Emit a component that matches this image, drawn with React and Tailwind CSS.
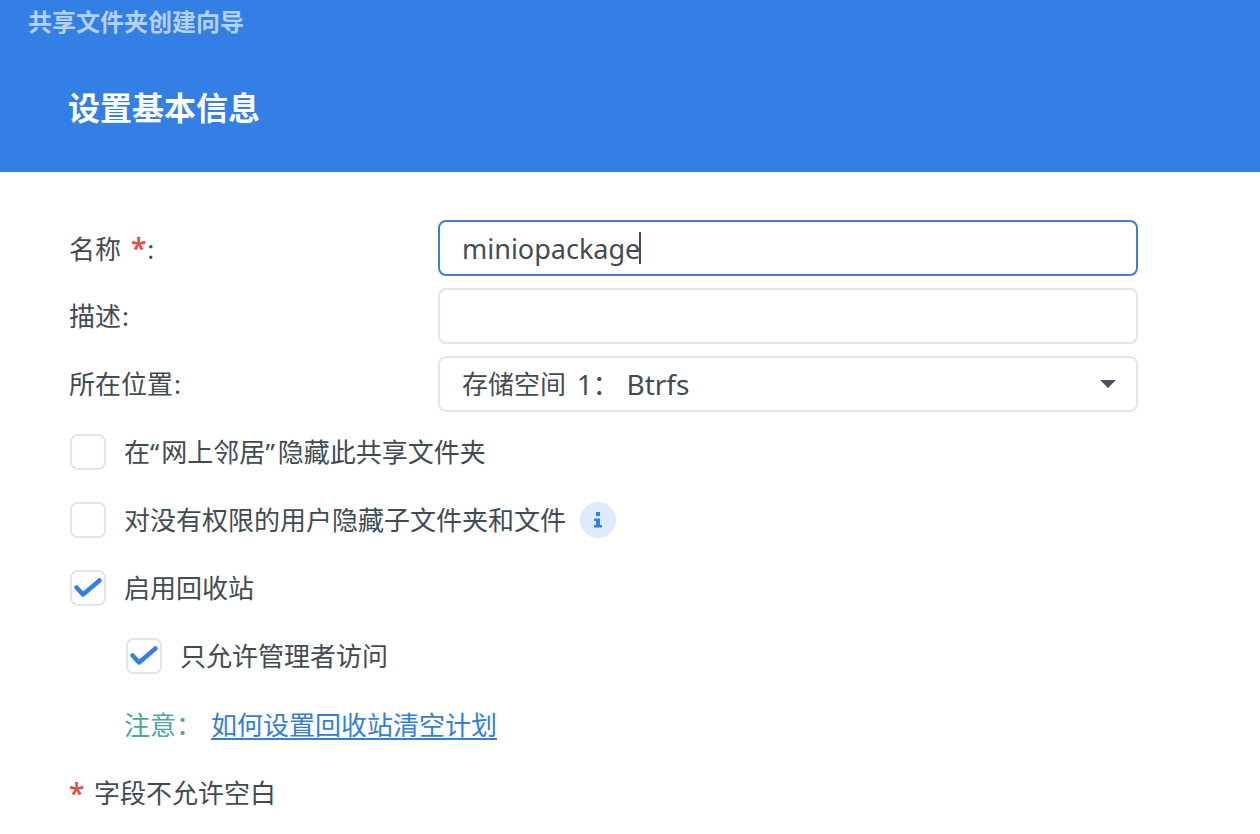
const FONT = "font-['Noto_Sans','Noto_Sans_CJK_SC',sans-serif]"
const INPUT = 'flex h-14 w-[700px] items-center rounded-[8px] border-2 bg-white pl-[22px] pr-5 text-[26px] leading-none text-[#414b55]'

function Check({ checked }) {
  return (
    <span className="flex h-9 w-9 shrink-0 items-center justify-center rounded-[8px] border-2 border-[#dfe6ec] bg-white">
      {checked && (
        <svg className="h-9 w-9 shrink-0" viewBox="0 0 36 36" fill="none">
          <path d="M6.5 17.5l6.5 7L29.5 10.5" stroke="#337fe5" strokeWidth="4.5" strokeLinecap="round" strokeLinejoin="round" />
        </svg>
      )}
    </span>
  )
}

function Field({ label, star, children }) {
  return (
    <div className="flex items-center">
      <div className="w-[369px] text-[26px] leading-none text-[#414b55]">
        {label}
        {star && <span className="ml-[10px] text-[28px] leading-none font-semibold text-[#d9534f]">*</span>}
        <span className="ml-px">:</span>
      </div>
      {children}
    </div>
  )
}

function CheckRow({ checked, children, indent }) {
  return (
    <div className={`flex h-9 items-center text-[26px] leading-none text-[#414b55] ${indent ? 'pl-[57px]' : 'pl-px'}`}>
      <Check checked={checked} />
      <span className="ml-[18px]">{children}</span>
    </div>
  )
}

export default function App() {
  return (
    <div className={`h-[834px] w-[1260px] overflow-hidden bg-white ${FONT}`}>
      <header className="h-[172px] bg-[#337fe5]">
        <div className="pl-7 pt-2 text-2xl leading-[28px] font-bold text-[#b5d2f6]">共享文件夹创建向导</div>
        <h1 className="pl-[68px] pt-[52px] text-[32px] leading-[40px] font-bold text-white">设置基本信息</h1>
      </header>

      <main className="pl-[69px] pt-12">
        <div className="flex flex-col gap-3">
          <Field label="名称" star>
            <div className={`${INPUT} border-[#3f80d4]`}>
              <span className="text-[27px]">miniopackage</span>
              <span className="-ml-px h-[32px] w-[2px] bg-[#414b55]" />
            </div>
          </Field>
          <Field label="描述">
            <div className={`${INPUT} border-[#dfe6ec]`} />
          </Field>
          <Field label="所在位置">
            <div className={`${INPUT} justify-between border-[#dfe6ec]`}>
              <span className="flex items-center">
                存储空间
                <span className="ml-[11px] text-[27px]">1：</span>
                <span className="ml-[7px] text-[28px]">Btrfs</span>
              </span>
              <span className="h-0 w-0 border-x-[8px] border-t-[8px] border-x-transparent border-t-[#4a5560]" />
            </div>
          </Field>
        </div>

        <div className="mt-[22px] flex flex-col gap-8">
          <CheckRow>
            在<span className="mr-0.5">“</span>网上邻居<span className="mr-[3px]">”</span>隐藏此共享文件夹
          </CheckRow>
          <div className="flex items-center">
            <CheckRow>对没有权限的用户隐藏子文件夹和文件</CheckRow>
            <span className="ml-[14px] flex h-9 w-9 items-center justify-center rounded-full bg-[#dcebfb]">
              <svg className="h-[18px] w-[12px]" viewBox="0 0 12 18" fill="#337fe5">
                <rect x="4" y="1" width="4" height="4" />
                <path d="M2 7.5h6v6.5h2v2.5H2V14h2v-4H2z" />
              </svg>
            </span>
          </div>
          <CheckRow checked>启用回收站</CheckRow>
          <CheckRow checked indent>只允许管理者访问</CheckRow>
        </div>

        <div className="mt-[33px] flex pl-[55px] text-[26px] leading-[36px]">
          <span className="w-[87px] text-[#4da79d]">注意：</span>
          <span className="text-[#337fd5] underline underline-offset-[3px]">如何设置回收站清空计划</span>
        </div>

        <div className="mt-[32px] flex text-[26px] leading-[36px] text-[#414b55]">
          <span className="w-[25px] text-[28px] font-semibold text-[#d9534f]">*</span>
          <span>字段不允许空白</span>
        </div>
      </main>
    </div>
  )
}
